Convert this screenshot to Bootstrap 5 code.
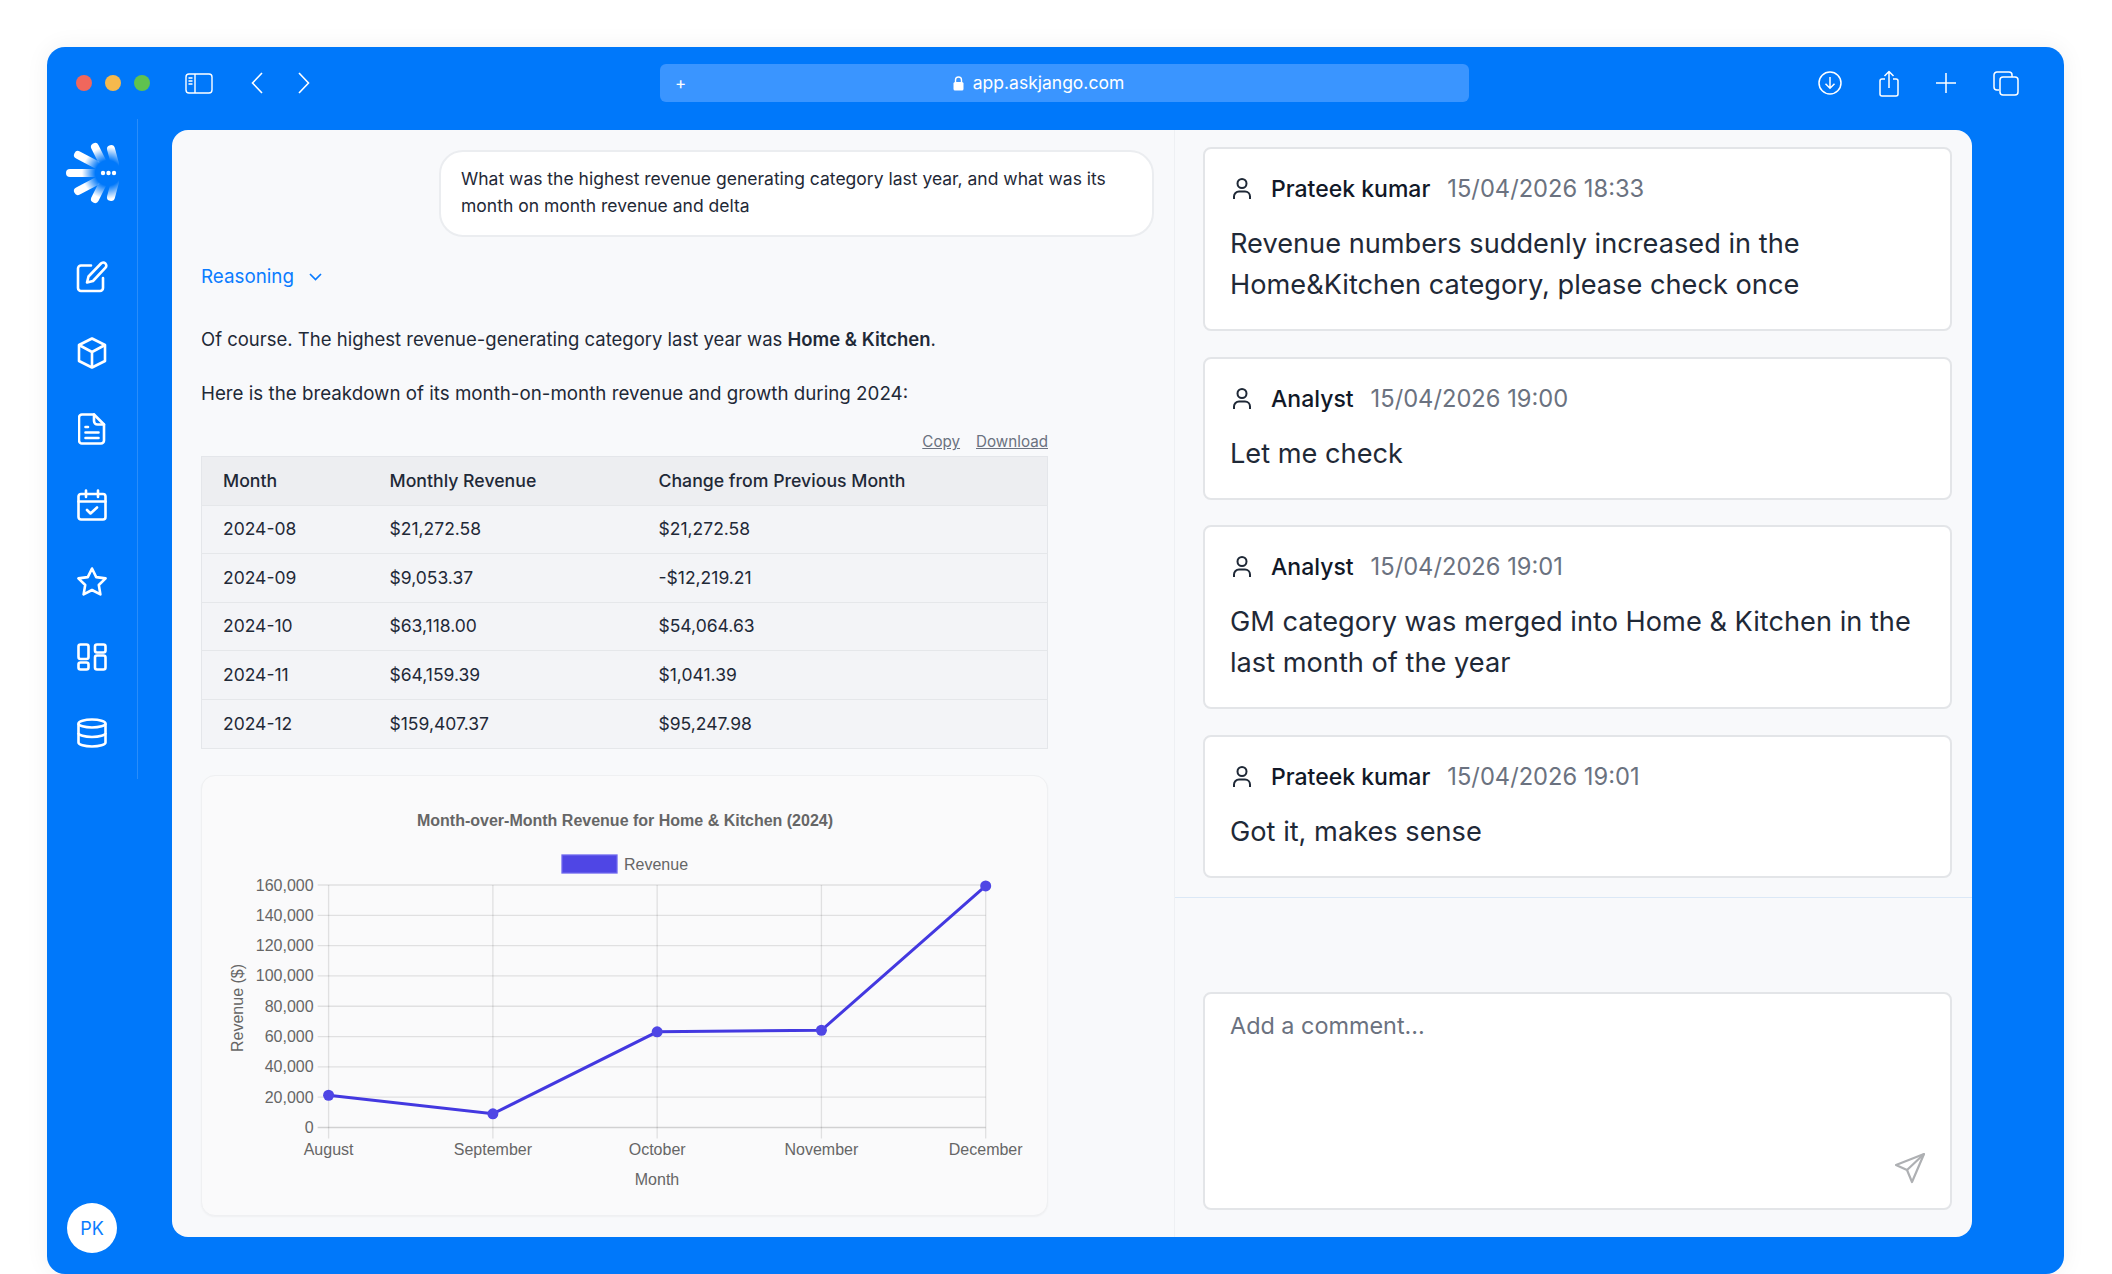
<!DOCTYPE html>
<html lang="en">
<head>
  <meta charset="UTF-8" />
  <title>Jango</title>
  <link href="https://cdn.jsdelivr.net/npm/bootstrap@5.3.3/dist/css/bootstrap.min.css" rel="stylesheet"/>
  <style>
    body {
      background-color: #fff;
      font-family: Inter, "Liberation Sans", sans-serif;
      color: #1f2937;
      padding: 47px 48px 0 47px;
      height: 1274px;
      overflow: hidden;
    }
    .app-window {
      background-color: #0078fa;
      border-radius: 18px;
      height: 1227px;
      box-shadow: 0 0 24px rgba(0,0,0,0.06);
    }
    .top-bar { height: 72px; color: #fff; }
    .traffic { width: 16px; height: 16px; border-radius: 50%; }
    .dots-box { margin-left: 29px; gap: 13px; margin-right: 35px; }
    .tr-red { background: #f0675c; }
    .tr-yellow { background: #f5b94d; }
    .tr-green { background: #5fc24f; }
    .nav-back { margin-left: 38px; }
    .nav-next { margin-left: 35px; }
    .url-bar {
      background-color: #3a95ff;
      border-radius: 6px;
      width: 809px;
      height: 38px;
      margin-left: 350px;
      padding-left: 15px;
      font-size: 17.5px;
    }
    .url-plus { font-size: 17px; line-height: 1; }
    .url-text { left: 0; right: 0; gap: 9px; padding-right: 52px; }
    .top-actions { margin-left: 349px; gap: 37px; }
    .main-area { height: 1155px; }
    .side-col { width: 125px; flex-shrink: 0; }
    .side-rail {
      width: 91px;
      height: 660px;
      border-right: 1px solid rgba(255,255,255,0.16);
    }
    .side-logo { padding-top: 22px; height: 120px; padding-left: 1px; }
    .side-icon { height: 76px; }
    .avatar-pk {
      width: 50px;
      height: 50px;
      background: #fff;
      color: #0a7cff;
      font-size: 18px;
      margin-left: 20px;
      margin-top: 424px;
      flex-shrink: 0;
    }
    .content-panel {
      margin-top: 11px;
      width: 1800px;
      height: 1107px;
      background: #f8f9fb;
      border-radius: 16px;
      overflow: hidden;
    }
    .chat-col {
      width: 1003px;
      padding: 20px 22px 0 29px;
      border-right: 1px solid #eef0f3;
    }
    .user-bubble {
      width: 715px;
      height: 87px;
      margin-left: 238px;
      padding: 13px 20px;
      background: #fff;
      border: 2px solid #ebedf0;
      border-radius: 24px;
      font-size: 17.5px;
      line-height: 27px;
      color: #1f2937;
    }
    .reasoning-link {
      color: #0a7cff;
      font-size: 18.8px;
      margin-top: 26px;
      gap: 15px;
      line-height: 27px;
    }
    .answer-text { line-height: 27px; margin: 0; color: #1f2937; }
    .answer-first { margin-top: 36px; font-size: 18.5px; }
    .answer-second { margin-top: 27px; font-size: 18.75px; }
    .table-tools {
      width: 847px;
      margin-top: 22px;
      height: 27px;
      gap: 16px;
      font-size: 15.2px;
    }
    .table-tools a { color: #6b7280; }
    .rev-table { width: 847px; margin: 0; font-size: 17.5px; border: 1px solid #e4e6ea; }
    .rev-table th, .rev-table td {
      background: #f3f4f7;
      color: #1f2937;
      padding: 0 0 0 21px;
      height: 48.6px;
      vertical-align: middle;
      border-bottom: 1px solid #e5e7ea;
      font-weight: 400;
    }
    .rev-table th { background: #edeef1; font-weight: 500; font-size: 17.7px; }
    .col-month { width: 167px; }
    .col-value { width: 269px; }
    .chart-card {
      width: 847px;
      height: 441px;
      margin-top: 26px;
      background: #fafafb;
      border: 1px solid #eff0f2;
      border-radius: 14px;
      box-shadow: 0 1px 2px rgba(0,0,0,0.04);
    }
    .chart-svg { display: block; font-family: "Liberation Sans", Arial, sans-serif; }
    .comments-col { width: 797px; }
    .comments-list { padding: 17px 20px 0 28px; height: 768px; gap: 25.5px; border-bottom: 1px solid #dbe8f6; }
    .note-card {
      background: #fff;
      border: 2px solid #e3e5e8;
      border-radius: 8px;
      padding: 22px 25px 0;
      width: 749px;
    }
    .note-one { height: 143px; }
    .note-two { height: 184px; }
    .note-head { font-size: 23.7px; line-height: 36px; height: 36px; }
    .note-head svg { margin-left: 2px; }
    .note-name { color: #111827; font-weight: 500; margin-left: 19px; font-size: 23px; }
    .note-date { color: #6b7280; margin-left: 17px; }
    .note-body { font-size: 27.2px; line-height: 41px; color: #1f2937; margin: 16px 0 0; }
    .comment-box {
      margin: 94px 0 0 28px;
      width: 749px;
      height: 218px;
      background: #fff;
      border: 2px solid #e3e5e8;
      border-radius: 8px;
      padding: 14px 25px;
      font-size: 23.4px;
      color: #6b7280;
    }
    .send-btn { right: 24px; bottom: 24px; line-height: 0; }
  </style>
</head>
<body>
  <div class="app-window d-flex flex-column">
    <div class="top-bar d-flex align-items-center position-relative">
      <div class="dots-box d-flex">
        <span class="traffic tr-red"></span>
        <span class="traffic tr-yellow"></span>
        <span class="traffic tr-green"></span>
      </div>
      <svg width="28" height="21" viewBox="0 0 28 21" fill="none" stroke="#fff" stroke-width="1.4"><rect x="1" y="1" width="26" height="19" rx="3"/><path d="M10 1v19"/><path d="M3.5 5h4M3.5 8h4M3.5 11h4" stroke-width="1.3"/></svg>
      <svg class="nav-back" width="12" height="22" viewBox="0 0 12 22" fill="none" stroke="#fff" stroke-width="1.6"><path d="M11 1 1.5 11 11 21"/></svg>
      <svg class="nav-next" width="12" height="22" viewBox="0 0 12 22" fill="none" stroke="#fff" stroke-width="1.6"><path d="M1 1l9.5 10L1 21"/></svg>
      <div class="url-bar d-flex align-items-center position-relative">
        <span class="url-plus">+</span>
        <div class="url-text position-absolute d-flex justify-content-center align-items-center">
          <svg width="11" height="15" viewBox="0 0 11 15"><path d="M2.5 6V4a3 3 0 0 1 6 0v2" fill="none" stroke="#fff" stroke-width="1.4"/><rect x="0.5" y="6" width="10" height="8.5" rx="1.5" fill="#fff"/></svg>
          <span>app.askjango.com</span>
        </div>
      </div>
      <div class="top-actions d-flex align-items-center">
        <svg width="24" height="24" viewBox="0 0 24 24" fill="none" stroke="#fff" stroke-width="1.5"><circle cx="12" cy="12" r="11"/><path d="M12 6v11M7.5 12.800 12 17.300l4.500-4.500"/></svg>
        <svg width="20" height="27" viewBox="0 0 20 27" fill="none" stroke="#fff" stroke-width="1.5" stroke-linejoin="round"><path d="M6 9H3a2 2 0 0 0-2 2v13a2 2 0 0 0 2 2h14a2 2 0 0 0 2-2V11a2 2 0 0 0-2-2h-3"/><path d="M10 18V1.500M5.500 6 10 1.500 14.500 6"/></svg>
        <svg width="20" height="20" viewBox="0 0 20 20" fill="none" stroke="#fff" stroke-width="1.5"><path d="M10 0v20M0 10h20"/></svg>
        <svg width="26" height="25" viewBox="0 0 26 25" fill="none" stroke="#fff" stroke-width="1.5"><path d="M6 19H4a3 3 0 0 1-3-3V4a3 3 0 0 1 3-3h12a3 3 0 0 1 3 3v2"/><rect x="7" y="6" width="18" height="18" rx="3"/></svg>
      </div>
    </div>
    <div class="main-area d-flex">
      <div class="side-col d-flex flex-column">
        <div class="side-rail d-flex flex-column">
          <div class="side-logo d-flex justify-content-center">
            <svg width="60" height="64" viewBox="0 0 60 64" fill="none" stroke-linecap="round" stroke-width="8">
              <defs>
                <radialGradient id="rayFade" gradientUnits="userSpaceOnUse" cx="45" cy="32" r="42">
                  <stop offset="0.3" stop-color="#fff" stop-opacity="0"/>
                  <stop offset="0.62" stop-color="#fff"/>
                </radialGradient>
              </defs>
              <g stroke="url(#rayFade)">
                <path d="M7 32h24"/>
                <path d="M15 14 34 24"/>
                <path d="M32 6 41 24"/>
                <path d="M48 8 52 23"/>
                <path d="M15 50 34 40"/>
                <path d="M32 58 41 40"/>
                <path d="M48 56 52 41"/>
              </g>
              <circle cx="40" cy="32" r="2.200" fill="#fff"/>
              <circle cx="45.500" cy="32" r="2.200" fill="#fff"/>
              <circle cx="51" cy="32" r="2.200" fill="#fff"/>
            </svg>
          </div>
          <div class="side-icon d-flex justify-content-center align-items-center">
            <svg width="32" height="32" viewBox="0 0 32 32" fill="none" stroke="#fff" stroke-width="2.600" stroke-linecap="round" stroke-linejoin="round"><path d="M15 4.500H5a3 3 0 0 0-3 3V27a3 3 0 0 0 3 3h19a3 3 0 0 0 3-3V17"/><path d="M25 2.500a3 3 0 0 1 4.500 4.200L17 20l-6 1.500L12.500 15.500z"/></svg>
          </div>
          <div class="side-icon d-flex justify-content-center align-items-center">
            <svg width="30" height="32" viewBox="0 0 30 32" fill="none" stroke="#fff" stroke-width="2.600" stroke-linejoin="round"><path d="M15 1.500 28 8v16l-13 6.500L2 24V8z"/><path d="M2 8l13 7 13-7M15 15v15.500"/></svg>
          </div>
          <div class="side-icon d-flex justify-content-center align-items-center">
            <svg width="28" height="32" viewBox="0 0 28 32" fill="none" stroke="#fff" stroke-width="2.600" stroke-linecap="round" stroke-linejoin="round"><path d="M4 1.500h12l10 10V27.500a3 3 0 0 1-3 3H4a3 3 0 0 1-3-3v-23a3 3 0 0 1 3-3z"/><path d="M16 1.500V8a3.500 3.500 0 0 0 3.500 3.500H26"/><path d="M7.500 14H10M7.500 19.500h13M7.500 25h13"/></svg>
          </div>
          <div class="side-icon d-flex justify-content-center align-items-center">
            <svg width="30" height="32" viewBox="0 0 30 32" fill="none" stroke="#fff" stroke-width="2.600" stroke-linecap="round" stroke-linejoin="round"><rect x="1.500" y="5" width="27" height="25.500" rx="2.500"/><path d="M1.500 12.500h27M9 1.500V8M21 1.500V8"/><path d="M10 21l3.500 3.500L20 18.500"/></svg>
          </div>
          <div class="side-icon d-flex justify-content-center align-items-center">
            <svg width="32" height="31" viewBox="0 0 32 31" fill="none" stroke="#fff" stroke-width="2.600" stroke-linejoin="round"><path d="M16 2.500l4.200 8.600 9.400 1.300-6.800 6.600 1.600 9.400-8.400-4.400-8.400 4.400 1.600-9.400-6.800-6.600 9.400-1.300z"/></svg>
          </div>
          <div class="side-icon d-flex justify-content-center align-items-center">
            <svg width="30" height="28" viewBox="0 0 30 28" fill="none" stroke="#fff" stroke-width="2.600"><rect x="1.500" y="1.500" width="10" height="14.500" rx="2"/><rect x="18" y="1.500" width="10.500" height="8" rx="2"/><rect x="1.500" y="19.500" width="10" height="7" rx="2"/><rect x="18" y="12.500" width="10.500" height="14" rx="2"/></svg>
          </div>
          <div class="side-icon d-flex justify-content-center align-items-center">
            <svg width="30" height="30" viewBox="0 0 30 30" fill="none" stroke="#fff" stroke-width="2.600"><ellipse cx="15" cy="5.500" rx="13.500" ry="4"/><path d="M1.500 5.500v19c0 2.200 6 4 13.500 4s13.500-1.800 13.500-4v-19"/><path d="M1.500 15c0 2.200 6 4 13.500 4s13.500-1.800 13.500-4"/></svg>
          </div>
        </div>
        <div class="avatar-pk rounded-circle d-flex justify-content-center align-items-center">PK</div>
      </div>

      <div class="content-panel d-flex">
        <div class="chat-col">
          <div class="user-bubble">What was the highest revenue generating category last year, and what was its month on month revenue and delta</div>
          <div class="reasoning-link d-flex align-items-center">
            <span>Reasoning</span>
            <svg width="13" height="8" viewBox="0 0 13 8" fill="none" stroke="#0a7cff" stroke-width="1.700"><path d="M1 1l5.500 5.500L12 1"/></svg>
          </div>
          <p class="answer-text answer-first">Of course. The highest revenue-generating category last year was <strong class="fw-semibold">Home &amp; Kitchen</strong>.</p>
          <p class="answer-text answer-second">Here is the breakdown of its month-on-month revenue and growth during 2024:</p>
          <div class="table-tools d-flex justify-content-end align-items-center">
            <a href="#">Copy</a>
            <a href="#">Download</a>
          </div>
          <table class="table rev-table">
            <colgroup><col class="col-month"><col class="col-value"><col></colgroup>
            <thead>
              <tr><th>Month</th><th>Monthly Revenue</th><th>Change from Previous Month</th></tr>
            </thead>
            <tbody>
              <tr><td>2024-08</td><td>$21,272.58</td><td>$21,272.58</td></tr>
              <tr><td>2024-09</td><td>$9,053.37</td><td>-$12,219.21</td></tr>
              <tr><td>2024-10</td><td>$63,118.00</td><td>$54,064.63</td></tr>
              <tr><td>2024-11</td><td>$64,159.39</td><td>$1,041.39</td></tr>
              <tr><td>2024-12</td><td>$159,407.37</td><td>$95,247.98</td></tr>
            </tbody>
          </table>
          <div class="chart-card">
            <svg id="revChart" class="chart-svg" width="845" height="439" viewBox="202 776 845 439"></svg>
          </div>
        </div>

        <div class="comments-col">
          <div class="comments-list d-flex flex-column">
            <div class="note-card note-two">
              <div class="note-head d-flex align-items-center">
                <svg width="20" height="24" viewBox="0 0 20 24" fill="none" stroke="#1f2937" stroke-width="2"><circle cx="10" cy="6.500" r="4.500"/><path d="M2 22v-2.500a5 5 0 0 1 5-5h6a5 5 0 0 1 5 5V22"/></svg>
                <span class="note-name">Prateek kumar</span><span class="note-date">15/04/2026 18:33</span>
              </div>
              <p class="note-body">Revenue numbers suddenly increased in the Home&amp;Kitchen category, please check once</p>
            </div>
            <div class="note-card note-one">
              <div class="note-head d-flex align-items-center">
                <svg width="20" height="24" viewBox="0 0 20 24" fill="none" stroke="#1f2937" stroke-width="2"><circle cx="10" cy="6.500" r="4.500"/><path d="M2 22v-2.500a5 5 0 0 1 5-5h6a5 5 0 0 1 5 5V22"/></svg>
                <span class="note-name">Analyst</span><span class="note-date">15/04/2026 19:00</span>
              </div>
              <p class="note-body">Let me check</p>
            </div>
            <div class="note-card note-two">
              <div class="note-head d-flex align-items-center">
                <svg width="20" height="24" viewBox="0 0 20 24" fill="none" stroke="#1f2937" stroke-width="2"><circle cx="10" cy="6.500" r="4.500"/><path d="M2 22v-2.500a5 5 0 0 1 5-5h6a5 5 0 0 1 5 5V22"/></svg>
                <span class="note-name">Analyst</span><span class="note-date">15/04/2026 19:01</span>
              </div>
              <p class="note-body">GM category was merged into Home &amp; Kitchen in the last month of the year</p>
            </div>
            <div class="note-card note-one">
              <div class="note-head d-flex align-items-center">
                <svg width="20" height="24" viewBox="0 0 20 24" fill="none" stroke="#1f2937" stroke-width="2"><circle cx="10" cy="6.500" r="4.500"/><path d="M2 22v-2.500a5 5 0 0 1 5-5h6a5 5 0 0 1 5 5V22"/></svg>
                <span class="note-name">Prateek kumar</span><span class="note-date">15/04/2026 19:01</span>
              </div>
              <p class="note-body">Got it, makes sense</p>
            </div>
          </div>
          <div class="comment-box position-relative">
            Add a comment...
            <div class="send-btn position-absolute">
              <svg width="32" height="32" viewBox="0 0 32 32" fill="none" stroke="#aeb0b3" stroke-width="2.200" stroke-linejoin="round"><path d="M30 2 2 13l11 5 5 12z"/><path d="M30 2 13 18"/></svg>
            </div>
          </div>
        </div>
      </div>
    </div>
  </div>

  <script>
    const svg = document.getElementById("revChart");
    const NS = "http://www.w3.org/2000/svg";
    const left = 328.6, right = 985.7, top_ = 885, bottom = 1127.5;
    const months = ["August", "September", "October", "November", "December"];
    const values = [21272.58, 9053.37, 63118, 64159.39, 159407.37];

    function add(tag, attrs, text) {
      const el = document.createElementNS(NS, tag);
      for (const k in attrs) el.setAttribute(k, attrs[k]);
      if (text) el.textContent = text;
      svg.appendChild(el);
      return el;
    }
    const grid = "rgba(0,0,0,0.1)";
    const label = { fill: "#666", "font-size": 16 };

    for (let i = 0; i <= 8; i++) {
      const y = bottom - i * (bottom - top_) / 8;
      add("line", { x1: left - 11, x2: right, y1: y, y2: y, stroke: i == 0 ? "rgba(0,0,0,0.16)" : grid, "stroke-width": 1.35 });
      add("text", { x: left - 15, y: y + 5.5, "text-anchor": "end", ...label }, (i * 20000).toLocaleString("en-US"));
    }
    months.forEach((m, i) => {
      const x = left + i * (right - left) / 4;
      add("line", { x1: x, x2: x, y1: top_, y2: bottom + 11, stroke: grid, "stroke-width": 1.35 });
      add("text", { x: x, y: 1155, "text-anchor": "middle", ...label }, m);
    });
    const pts = values.map((v, i) => [left + i * (right - left) / 4, bottom - v / 160000 * (bottom - top_)]);
    add("polyline", { points: pts.map(p => p.join(",")).join(" "), fill: "none", stroke: "#4338e0", "stroke-width": 3 });
    pts.forEach(p => add("circle", { cx: p[0], cy: p[1], r: 5.5, fill: "#4f46e5" }));

    add("text", { x: 625, y: 826, "text-anchor": "middle", fill: "#666", "font-size": 16, "font-weight": 700 }, "Month-over-Month Revenue for Home & Kitchen (2024)");
    add("rect", { x: 562, y: 855, width: 55, height: 18, fill: "#4f46e5", stroke: "#6f68ee", "stroke-width": 1.3 });
    add("text", { x: 624, y: 870, ...label }, "Revenue");
    add("text", { x: 657, y: 1185, "text-anchor": "middle", ...label }, "Month");
    add("text", { x: 0, y: 0, "text-anchor": "middle", transform: "translate(243 1008) rotate(-90)", ...label }, "Revenue ($)");
  </script>
</body>
</html>
